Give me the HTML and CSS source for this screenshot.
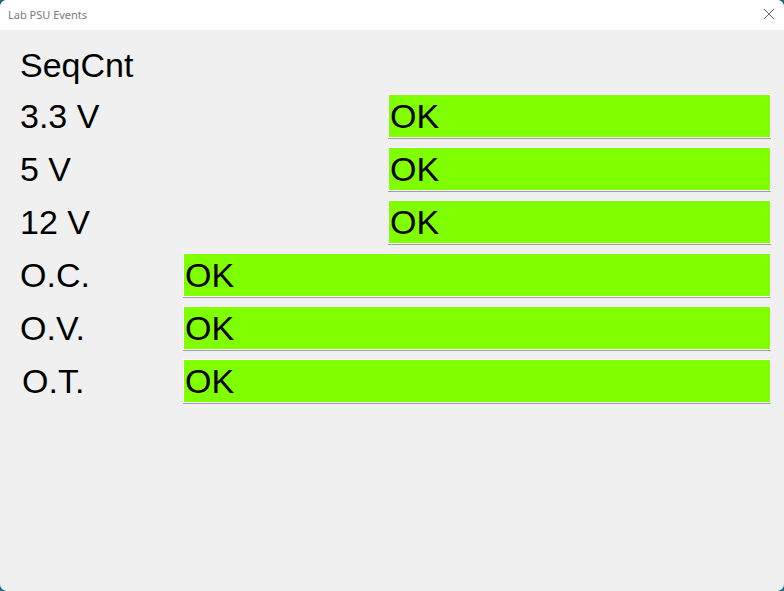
FILE: index.html
```html
<!DOCTYPE html>
<html lang="en">
<head>
<meta charset="utf-8">
<title>Lab PSU Events</title>
<link rel="stylesheet" href="styles.css">
</head>
<body>
<div class="window">
  <header class="titlebar">
    <span class="title">Lab PSU Events</span>
    <svg class="close" width="12" height="12" viewBox="0 0 12 12" aria-hidden="true">
      <path d="M1 1 L11 11 M11 1 L1 11" stroke="#6e6e6e" stroke-width="1" fill="none"/>
    </svg>
  </header>
  <main class="content">
    <div class="row head"><span class="label">SeqCnt</span></div>
    <div class="rows">
      <div class="row"><span class="label">3.3 V</span><div class="status short">OK</div></div>
      <div class="row"><span class="label">5 V</span><div class="status short">OK</div></div>
      <div class="row"><span class="label">12 V</span><div class="status short">OK</div></div>
      <div class="row"><span class="label">O.C.</span><div class="status">OK</div></div>
      <div class="row"><span class="label">O.V.</span><div class="status">OK</div></div>
      <div class="row"><span class="label indent">O.T.</span><div class="status">OK</div></div>
    </div>
  </main>
</div>
</body>
</html>
```
FILE: styles.css
```css
html, body {
  margin: 0;
  padding: 0;
  background: #1f6a7c;
}
.window {
  width: 784px;
  height: 591px;
  background: #f0f0f0;
  border-radius: 7px;
  overflow: hidden;
  display: flex;
  flex-direction: column;
}
.titlebar {
  height: 30px;
  background: #ffffff;
  display: flex;
  align-items: center;
  justify-content: space-between;
  padding: 0 9px 0 8px;
  box-sizing: border-box;
  flex: none;
}
.title {
  font-family: "Noto Sans", "Open Sans", sans-serif;
  font-size: 11px;
  color: #7a7a7a;
  margin-top: -2px;
}
.close {
  display: block;
  margin-top: -2px;
}
.content {
  padding: 13px 13px 0 20px;
  font-family: "Liberation Sans", Arial, sans-serif;
  font-size: 34px;
  color: #000;
}
.rows {
  display: flex;
  flex-direction: column;
  gap: 9px;
  margin-top: 7px;
}
.row {
  display: flex;
  height: 44px;
}
.label {
  width: 163px;
  flex: none;
  box-sizing: border-box;
  line-height: 42px;
  padding-top: 1px;
  white-space: nowrap;
}
.label.indent {
  padding-left: 2px;
}
.status {
  flex: 1;
  height: 42px;
  line-height: 42px;
  border: 1px solid #ffffff;
  background: #80ff00;
  box-shadow: 0 1px 0 #a0a0a0;
  padding-left: 1px;
  white-space: nowrap;
}
.status.short {
  margin-left: 205px;
}
```
